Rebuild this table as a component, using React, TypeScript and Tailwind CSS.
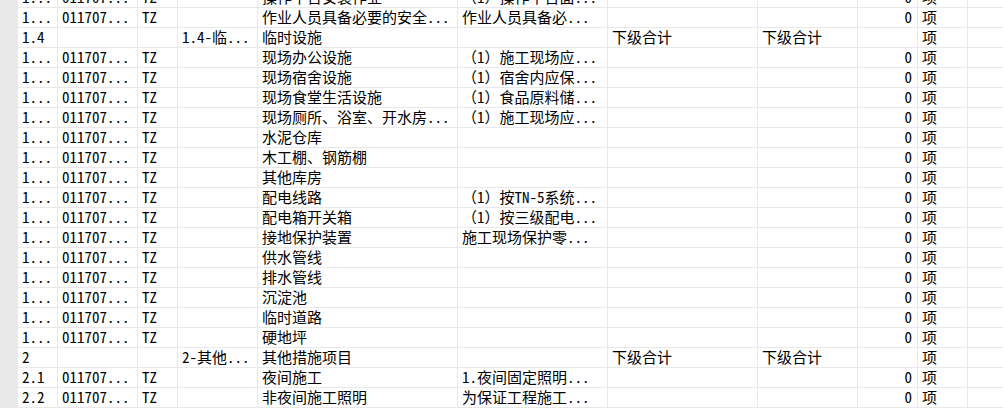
import React from "react";

type Row = {
  no: string;
  code?: string;
  type?: string;
  cat?: string;
  name: string;
  desc?: string;
  c7?: string;
  c8?: string;
  qty?: string;
};

const rows: Row[] = [
  { no: "1...", code: "011707...", type: "TZ", name: "操作平台安装作业", desc: "（1）操作平台面...", qty: "0" },
  { no: "1...", code: "011707...", type: "TZ", name: "作业人员具备必要的安全...", desc: "作业人员具备必...", qty: "0" },
  { no: "1.4", cat: "1.4-临...", name: "临时设施", c7: "下级合计", c8: "下级合计" },
  { no: "1...", code: "011707...", type: "TZ", name: "现场办公设施", desc: "（1）施工现场应...", qty: "0" },
  { no: "1...", code: "011707...", type: "TZ", name: "现场宿舍设施", desc: "（1）宿舍内应保...", qty: "0" },
  { no: "1...", code: "011707...", type: "TZ", name: "现场食堂生活设施", desc: "（1）食品原料储...", qty: "0" },
  { no: "1...", code: "011707...", type: "TZ", name: "现场厕所、浴室、开水房...", desc: "（1）施工现场应...", qty: "0" },
  { no: "1...", code: "011707...", type: "TZ", name: "水泥仓库", qty: "0" },
  { no: "1...", code: "011707...", type: "TZ", name: "木工棚、钢筋棚", qty: "0" },
  { no: "1...", code: "011707...", type: "TZ", name: "其他库房", qty: "0" },
  { no: "1...", code: "011707...", type: "TZ", name: "配电线路", desc: "（1）按TN-5系统...", qty: "0" },
  { no: "1...", code: "011707...", type: "TZ", name: "配电箱开关箱", desc: "（1）按三级配电...", qty: "0" },
  { no: "1...", code: "011707...", type: "TZ", name: "接地保护装置", desc: "施工现场保护零...", qty: "0" },
  { no: "1...", code: "011707...", type: "TZ", name: "供水管线", qty: "0" },
  { no: "1...", code: "011707...", type: "TZ", name: "排水管线", qty: "0" },
  { no: "1...", code: "011707...", type: "TZ", name: "沉淀池", qty: "0" },
  { no: "1...", code: "011707...", type: "TZ", name: "临时道路", qty: "0" },
  { no: "1...", code: "011707...", type: "TZ", name: "硬地坪", qty: "0" },
  { no: "2", cat: "2-其他...", name: "其他措施项目", c7: "下级合计", c8: "下级合计" },
  { no: "2.1", code: "011707...", type: "TZ", name: "夜间施工", desc: "1.夜间固定照明...", qty: "0" },
  { no: "2.2", code: "011707...", type: "TZ", name: "非夜间施工照明", desc: "为保证工程施工...", qty: "0" },
];

const cell = "h-5 border-r border-b border-[#e8e8e8] pl-1 leading-[18px] whitespace-nowrap";

export default function App() {
  return (
    <div
      className="h-[408px] w-[1003px] overflow-hidden bg-white text-[15px] text-black"
      style={{ fontFamily: '"Noto Sans Mono CJK SC", "Noto Sans CJK SC", "Liberation Mono", monospace' }}
    >
      <div className="-mt-[12px] grid grid-cols-[18px_40px_80px_40px_80px_200px_150px_150px_100px_60px_50px_1fr]">
        {rows.map((r, i) => (
          <React.Fragment key={i}>
            <div className="h-5 bg-[#e9e9e9]" />
            <div className={cell}>{r.no}</div>
            <div className={cell}>{r.code}</div>
            <div className={cell}>{r.type}</div>
            <div className={cell}>{r.cat}</div>
            <div className={cell}>{r.name}</div>
            <div className={cell}>{r.desc}</div>
            <div className={cell}>{r.c7}</div>
            <div className={cell}>{r.c8}</div>
            <div className={`${cell} pr-[5px] text-right`}>{r.qty}</div>
            <div className={cell}>项</div>
            <div className="h-5 border-b border-[#e8e8e8]" />
          </React.Fragment>
        ))}
      </div>
    </div>
  );
}
